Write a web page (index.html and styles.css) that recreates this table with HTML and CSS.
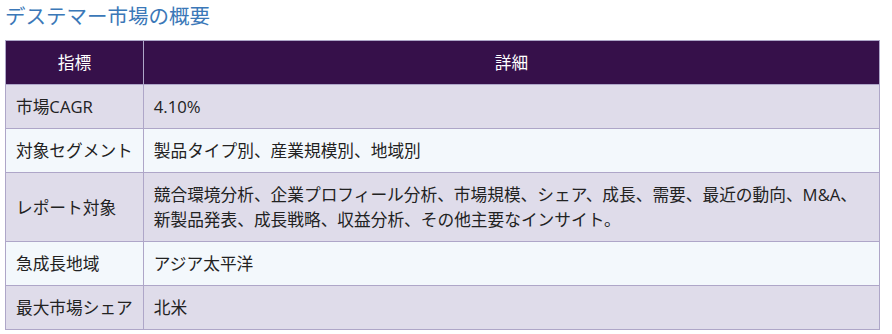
FILE: index.html
```html
<!DOCTYPE html>
<html lang="ja">
<head>
    <meta charset="UTF-8">
    <meta name="viewport" content="width=device-width, initial-scale=1.0">
    <title>デステマー市場の概要</title>
    <link rel="stylesheet" href="styles.css">
</head>
<body>
    <div class="overview">
        <!-- 見出し -->
        <h2 class="overview-title">デステマー市場の概要</h2>
        <!-- 概要テーブル -->
        <table class="overview-table">
            <thead>
                <tr>
                    <th class="col-key">指標</th>
                    <th>詳細</th>
                </tr>
            </thead>
            <tbody>
                <tr>
                    <td>市場CAGR</td>
                    <td>4.10%</td>
                </tr>
                <tr>
                    <td>対象セグメント</td>
                    <td>製品タイプ別、産業規模別、地域別</td>
                </tr>
                <tr>
                    <td>レポート対象</td>
                    <td>競合環境分析、企業プロフィール分析、市場規模、シェア、成長、需要、最近の動向、M&amp;A、新製品発表、成長戦略、収益分析、その他主要なインサイト。</td>
                </tr>
                <tr>
                    <td>急成長地域</td>
                    <td>アジア太平洋</td>
                </tr>
                <tr>
                    <td>最大市場シェア</td>
                    <td>北米</td>
                </tr>
            </tbody>
        </table>
    </div>
</body>
</html>
```

FILE: styles.css
```css
/* 全体 */
body {
    margin: 0;
    padding: 0 5px;
    background: #fff;
    color: #222;
    font-family: "Open Sans", "Noto Sans CJK JP", sans-serif;
}
.overview {
    width: 875px;
}
/* 見出し */
.overview-title {
    margin: 0 0 11px;
    padding-top: 3px;
    font-size: 20.5px;
    font-weight: normal;
    line-height: 26px;
    color: #3b78b8;
}
/* テーブル */
.overview-table {
    width: 100%;
    border-collapse: collapse;
    font-size: 16.7px;
    line-height: 25px;
}
.overview-table th,
.overview-table td {
    padding: 9px 10px;
    border: 1px solid #aea6c8;
    text-align: left;
    vertical-align: middle;
}
.overview-table th {
    background: #36104a;
    color: #fff;
    font-weight: normal;
    text-align: center;
}
.overview-table .col-key {
    width: 116px;
}
/* 指標列は折り返さない */
.overview-table td:first-child {
    white-space: nowrap;
}
.overview-table tbody tr:nth-child(odd) {
    background: #dfdcea;
}
.overview-table tbody tr:nth-child(even) {
    background: #f3f8fc;
}
```
